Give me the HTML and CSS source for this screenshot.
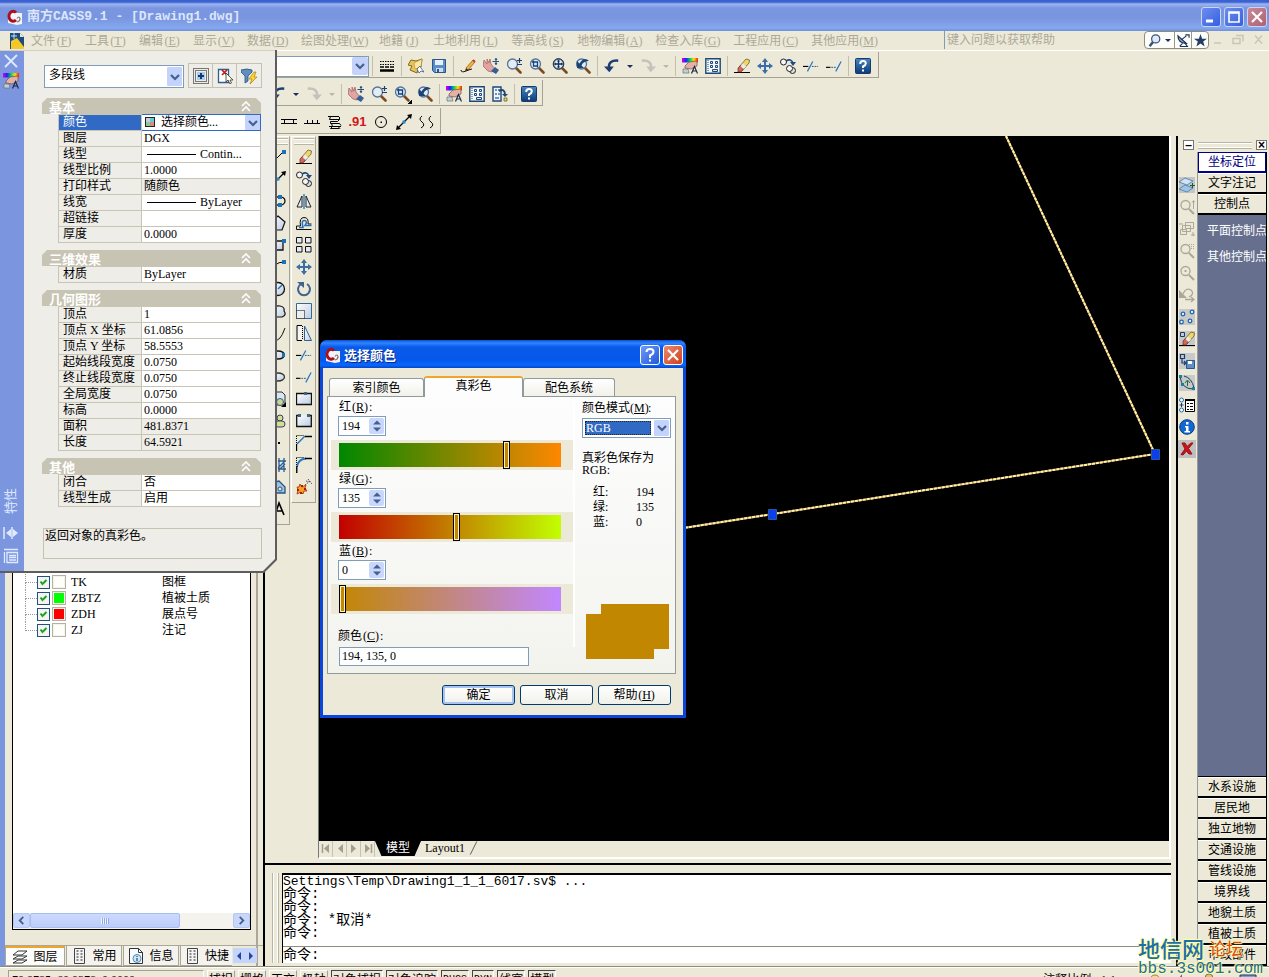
FILE: index.html
```html
<!DOCTYPE html>
<html lang="zh-CN">
<head>
<meta charset="utf-8">
<title>南方CASS9.1 - [Drawing1.dwg]</title>
<link rel="stylesheet" href="styles.css">
</head>
<body>
<svg class="sprite" aria-hidden="true">
<defs>
<linearGradient id="gl" x1="0" y1="0" x2="1" y2="1"><stop offset="0" stop-color="#fff"/><stop offset="1" stop-color="#bccbe2"/></linearGradient>
<linearGradient id="gb" x1="0" y1="0" x2="0" y2="1"><stop offset="0" stop-color="#4a86c0"/><stop offset="1" stop-color="#0c3a78"/></linearGradient>
<linearGradient id="rainbow"><stop offset="0" stop-color="#e000e0"/><stop offset=".25" stop-color="#2020ff"/><stop offset=".5" stop-color="#00d060"/><stop offset=".75" stop-color="#ffe000"/><stop offset="1" stop-color="#f02000"/></linearGradient>
</defs>
<symbol id="logo" viewBox="0 0 16 16"><path d="M1 4h14v11l-5 1-9-2z" fill="#f4f2f4"/><path d="M9 3.500A4.200 5 0 1 0 9 11" fill="none" stroke="#a5121f" stroke-width="3"/><path d="M10 9.500q2-3 3 0q0 3-3 3.500" fill="none" stroke="#777" stroke-width="1.200"/></symbol>
<symbol id="doc" viewBox="0 0 16 18"><path d="M1 1h10l4 4v12H1z" fill="#1e4a7c"/><path d="M11 1l4 4h-4z" fill="#dfe8f2"/><path d="M2 9l6-3 7 9v2H2z" fill="#f3c92a"/><path d="M5 1v6M2 4h6" stroke="#bfe3ff"/></symbol>
<symbol id="lw" viewBox="0 0 16 16"><path d="M1 3.500h14M1 6.500h14" stroke="#000" stroke-dasharray="1.500 1"/><path d="M1 9h14" stroke="#000" stroke-width="1.500" stroke-dasharray="4 1"/><path d="M1 12.500h14" stroke="#000" stroke-width="2.500"/></symbol>
<symbol id="open" viewBox="0 0 16 16"><path d="M3 2l5 1 6-2-1 8-3 1-1 5-7-3 2-4-4-1z" fill="#e8c45c" stroke="#86651c"/><path d="M6 5l8-4-1 8-6 2z" fill="#f9e9a4" stroke="#b08d34" stroke-width=".6"/><path d="M9 11l3-3 1 2 3 4-3-1-2 2z" fill="#fff" stroke="#345b8d" stroke-width=".8"/></symbol>
<symbol id="save" viewBox="0 0 16 16"><path d="M1.500 1.500h13v13h-11l-2-2z" fill="#5c8ec5" stroke="#28578e"/><path d="M4 2h8v5H4z" fill="#e6f0fa"/><path d="M5 10h7v4H5z" fill="#cddcf0"/><path d="M6 11h2v3H6z" fill="#28578e"/></symbol>
<symbol id="pencil" viewBox="0 0 16 16"><path d="M6 10L13 2l2 2-7 8z" fill="#f1b63d" stroke="#9a5a1a" stroke-width=".8"/><path d="M6 10l2 2-3 1z" fill="#3a2a1a"/><path d="M1 12q0 3 5 1q5-2 6-2" fill="none" stroke="#111"/><path d="M13 2l2 2" stroke="#c43c2c" stroke-width="2"/></symbol>
<symbol id="pan" viewBox="0 0 16 16"><path d="M1 2l3 4 0-5 2 4 1-4 1 5 4 5-3 3-4-1-5-5z" fill="#e0a5a2" stroke="#9d5a5a" stroke-width=".7"/><path d="M8 13l4-4 4 3-3 4z" fill="#355f92"/><path d="M13 0v7M9.500 3.500h7" stroke="#23507f"/><path d="M13 0l1.500 2h-3zM13 7l1.500-2h-3z" fill="#23507f"/></symbol>
<symbol id="mag" viewBox="0 0 16 16"><path d="M10 10l4.500 4.500" stroke="#7b4c22" stroke-width="2.600" stroke-linecap="round"/><circle cx="6.500" cy="6" r="5" fill="#e3ecf3" stroke="#567399" stroke-width="1.300"/></symbol>
<symbol id="zpm" viewBox="0 0 16 16"><use href="#mag"/><path d="M13.500 0v5M11 2.500h5M11 6.500h5" stroke="#1d3f6c" stroke-width="1.200"/></symbol>
<symbol id="zwin" viewBox="0 0 16 16"><use href="#mag"/><path d="M4.500 4h4v4h-4zM3 4h1.500M4.500 2.500V4M8.500 8v1.500" fill="#dbe8f6" stroke="#16427c" stroke-width="1.300"/></symbol>
<symbol id="zext" viewBox="0 0 16 16"><use href="#mag"/><path d="M6.500 2v8M2.500 6h8" stroke="#12335f" stroke-width="1.300"/><path d="M6.500 1.500L8 3.500H5zM6.500 10.500L8 8.500H5zM2 6l2-1.500v3zM11 6L9 4.500v3z" fill="#12335f"/><circle cx="6.500" cy="6" r="5.300" fill="none" stroke="#333"/></symbol>
<symbol id="zprev" viewBox="0 0 16 16"><use href="#mag"/><path d="M2 3v7h7L6.500 7.500Q8 3 14 3 9-2 4.500 5.500z" fill="#1c4375"/></symbol>
<symbol id="undo" viewBox="0 0 18 16"><path d="M16 2Q5 1 5.500 10" fill="none" stroke="#1d3e6e" stroke-width="2.800"/><path d="M0 8.500h11l-5 6.500z" fill="#1d3e6e"/></symbol>
<symbol id="redo" viewBox="0 0 18 16"><path d="M2 2Q13 1 12.500 10" fill="none" stroke="#c3c2bb" stroke-width="2.800"/><path d="M7 8.500h11l-6 6.500z" fill="#c3c2bb"/></symbol>
<symbol id="props" viewBox="0 0 16 16"><path d="M0 0h16v4.500H0z" fill="url(#rainbow)"/><path d="M3 8l4-4 8-1v5l-6 3-6-1z" fill="#e4b1a6" stroke="#7c4840" stroke-width=".7"/><path d="M1 11h5l1 4H1z" fill="#c3cfd0" stroke="#61757a" stroke-width=".7"/><path d="M9.500 15.500l3-7 3 7M10.500 13h4" fill="none" stroke="#1b2a48" stroke-width="1.200"/></symbol>
<symbol id="grid" viewBox="0 0 16 16"><path d="M.8.800h14.400v14.400H.8z" fill="#f3f7fc" stroke="#1f4775" stroke-width="1.400"/><path d="M3 2v12" stroke="#1f4775" stroke-dasharray="1 1"/><path d="M5.500 3.500h2v2h-2zM10.500 3.500h2v2h-2zM5.500 7.500h2v2h-2zM10.500 7.500h2v2h-2zM7.500 11.500h5v2h-5z" fill="#dce8f5" stroke="#1f4775"/></symbol>
<symbol id="dc" viewBox="0 0 16 16"><path d="M1 1h8v14H1z" fill="#eef4fb" stroke="#1f4775" stroke-width="1.400"/><path d="M3 3h2v2H3zM6 3h2v2H6zM3 7h2v2H3zM6 7h2v2H6zM3 11h4v2H3z" fill="#6f93bd"/><path d="M7 5q6-3 6 4" fill="none" stroke="#1f4775" stroke-width="2"/><path d="M10 8h6l-3 3z" fill="#1f4775"/><path d="M12 12h3v3h-3z" fill="#f3e33b" stroke="#333" stroke-width=".6"/></symbol>
<symbol id="eraser" viewBox="0 0 16 16"><path d="M0 14.500h16" stroke="#000"/><path d="M5 9l7-8 3.500 1-.5 3-7 8z" fill="#f0d669" stroke="#5c4a20" stroke-width=".7"/><path d="M4 10l3-3 3 3-3 4H4z" fill="#d0695a" stroke="#6b2a20" stroke-width=".7"/><path d="M6.500 8L9 5.500l3 3L9.500 11z" fill="#e8ecf2"/></symbol>
<symbol id="move" viewBox="0 0 16 16"><path d="M8 2v12M2 8h12" stroke="#3b6ea5" stroke-width="2"/><path d="M8 0l3 4H5zM8 16l3-4H5zM0 8l4-3v6zM16 8l-4-3v6z" fill="#3b6ea5"/></symbol>
<symbol id="copy" viewBox="0 0 16 16"><circle cx="3.500" cy="4" r="3" fill="#f3f6fa" stroke="#222"/><circle cx="12.500" cy="12.500" r="3" fill="#ddd" stroke="#222"/><circle cx="9.500" cy="10.500" r="3" fill="#f3f6fa" stroke="#222"/><path d="M6 3q5-3 7 2" fill="none" stroke="#1d4a80" stroke-width="1.600"/><path d="M10 4h6l-3 4z" fill="#1d4a80"/></symbol>
<symbol id="trim" viewBox="0 0 18 16"><path d="M0 8.500h6" stroke="#000" stroke-width="1.300"/><path d="M5 14l6-11" stroke="#2a77bd" stroke-width="1.400"/><path d="M10 8.500h7" stroke="#1d4a80" stroke-dasharray="2 1"/></symbol>
<symbol id="extend" viewBox="0 0 18 16"><path d="M0 9.500h5" stroke="#000" stroke-width="1.300"/><path d="M6 9.500h5" stroke="#1d4a80" stroke-dasharray="2 1"/><path d="M11 14l6-11" stroke="#2a77bd" stroke-width="1.400"/></symbol>
<symbol id="help" viewBox="0 0 16 16"><rect x=".5" y=".5" width="15" height="15" rx="1" fill="url(#gb)" stroke="#123a6b"/><path d="M5.200 6q0-3 2.800-3t2.800 2.400Q10.800 7 8 8.500V10" fill="none" stroke="#fff" stroke-width="2"/><path d="M7 11.500h2v2H7z" fill="#fff"/></symbol>
<symbol id="fence" viewBox="0 0 16 16"><path d="M0 5.500h16M0 9.500h16M3.500 5v5M12.500 5v5" stroke="#000" fill="none"/></symbol>
<symbol id="comb" viewBox="0 0 16 16"><path d="M0 9.500h16M3.500 6v4M8.500 6v4M13.500 6v4" stroke="#000"/></symbol>
<symbol id="steps" viewBox="0 0 16 16"><path d="M1 2.500h11M3.500 2.500l-1 3h10M12.500 3v2.500l-2 2H3.500v2h9l1.500 2M2 12.500h12M4.500 9.500l1 3-2 2h9M11 12.500l2 2" fill="none" stroke="#000"/></symbol>
<symbol id="cdot" viewBox="0 0 16 16"><circle cx="8" cy="8" r="5.500" fill="none" stroke="#000"/><path d="M7.500 7.500h1.500v1.500H7.500z"/></symbol>
<symbol id="larrow" viewBox="0 0 16 16"><path d="M2 14L14 2" stroke="#000" stroke-width="1.300"/><path d="M16 0l-1 5-4-4zM0 16l1-5 4 4z"/><path d="M6.500 6.500h3v3h-3z" fill="#1b8dd0"/></symbol>
<symbol id="waves" viewBox="0 0 16 16"><path d="M3 2q-4 3 0 6t-1 6M12 2q-4 3 0 6t-1 6" fill="none" stroke="#000"/></symbol>
<symbol id="mirror" viewBox="0 0 16 16"><path d="M8 1v15" stroke="#2471b4" stroke-width="1.300"/><path d="M6 3v11H1zM10 3v11h5z" fill="#e5ebf3" stroke="#222"/></symbol>
<symbol id="offset" viewBox="0 0 16 16"><path d="M.5 14.500v-3.500h4Q3 2.500 8 2.500T12 9h3.500" fill="none" stroke="#111"/><path d="M.5 14.500h15" stroke="#111"/><path d="M3 12.500h4Q5 5 8.500 5.500T9 10.500h6.500" fill="none" stroke="#2471b4" stroke-width="1.500"/></symbol>
<symbol id="array" viewBox="0 0 16 16"><path d="M.5.500h5.500v5.500H.5zM9.500.500H15v5.500H9.500zM.5 9.500h5.500V15H.5zM9.500 9.500H15V15H9.500z" fill="#e5ebf3" stroke="#111"/></symbol>
<symbol id="rotate" viewBox="0 0 16 16"><path d="M5 3A6 6 0 1 0 11 3" fill="none" stroke="#40648e" stroke-width="2"/><path d="M1 1h7v6z" fill="#40648e"/></symbol>
<symbol id="scale" viewBox="0 0 16 16"><path d="M.5.500h15v15H.5z" fill="url(#gl)" stroke="#35669a"/><path d="M.5 7.500h8v8h-8z" fill="#eee" stroke="#000" stroke-dasharray="1 1"/></symbol>
<symbol id="stretch" viewBox="0 0 16 16"><path d="M6 .5H1v15h5" fill="#f5f5f5" stroke="#000"/><path d="M6.500 1v14" stroke="#000" stroke-dasharray="1 1"/><path d="M8.500 1l7 14.500h-7z" fill="url(#gl)" stroke="#2f6190"/></symbol>
<symbol id="brkpt" viewBox="0 0 16 16"><path d="M.5 2.500h15v11H.5z" fill="url(#gl)" stroke="#111" stroke-width="1.300"/><path d="M8 1h3v3H8z" fill="#3d6588"/></symbol>
<symbol id="brk" viewBox="0 0 16 16"><path d="M1 2.500h14v11H1z" fill="url(#gl)"/><path d="M3 2.500H.700v11h14.600v-11H13" fill="none" stroke="#111" stroke-width="1.300"/><path d="M2 1h3v3H2zM11 1h3v3h-3z" fill="#3d6588"/></symbol>
<symbol id="chamfer" viewBox="0 0 16 16"><path d="M.5 1v15M.5.500h8" stroke="#000" stroke-dasharray="1 1"/><path d="M1 9L9 1" stroke="#2a77bd" stroke-width="1.500"/><path d="M9 1.500h7M.5 9v7" stroke="#000" stroke-width="1.300"/></symbol>
<symbol id="fillet" viewBox="0 0 16 16"><path d="M.5 1v15M.5.500h8" stroke="#000" stroke-dasharray="1 1"/><path d="M1 10Q2 2 10 1.500" fill="none" stroke="#2a77bd" stroke-width="1.800"/><path d="M9 1.500h7M.8 9v7" stroke="#000" stroke-width="1.300"/></symbol>
<symbol id="explode" viewBox="0 0 16 16"><path d="M1 8l2 0 1-3 2 3 4-2-1 3 2 3-3 0-1 3-2-2-4 2 1-4z" fill="#f2a322" stroke="#a52a12" stroke-width=".8"/><path d="M1 10h2v2H1zM5 6h2v2H5zM4 13h2v2H4zM8 9h2v2H8z" fill="#b3150f"/><path d="M9 6l5-4M12 0l4 5M10 2l5 1" stroke="#555" stroke-dasharray="1.500 1"/></symbol>
<symbol id="d-line" viewBox="0 0 16 16"><path d="M2 14L13 3" stroke="#000"/><path d="M12 1h4v4h-4z" fill="#1b72b8"/></symbol>
<symbol id="d-pl" viewBox="0 0 16 16"><path d="M7 4q8-1 8 4t-8 4" fill="none" stroke="#111" stroke-width="1.300"/><path d="M8 2h4v4H8zM8 10h4v4H8z" fill="#1b72b8"/></symbol>
<symbol id="d-poly" viewBox="0 0 16 16"><path d="M8 1l7 6-3 8H3L1 7z" fill="url(#gl)" stroke="#111" stroke-width="1.200"/></symbol>
<symbol id="d-rect" viewBox="0 0 16 16"><path d="M1 4h12v9H1z" fill="url(#gl)" stroke="#111" stroke-width="1.300"/><path d="M12 2h4v4h-4z" fill="#1b72b8"/></symbol>
<symbol id="d-arc" viewBox="0 0 16 16"><path d="M2 14Q3 3 14 3" fill="none" stroke="#000"/><path d="M12 1h4v4h-4z" fill="#1b72b8"/></symbol>
<symbol id="d-circ" viewBox="0 0 16 16"><circle cx="8" cy="8" r="6.500" fill="url(#gl)" stroke="#111" stroke-width="1.300"/><path d="M8 8l4-4" stroke="#1b72b8" stroke-width="1.500"/></symbol>
<symbol id="d-cloud" viewBox="0 0 16 16"><path d="M3 14q-4-5 1-6 0-6 6-5 5 1 4 5 3 4-2 6z" fill="url(#gl)" stroke="#111" stroke-width="1.200"/></symbol>
<symbol id="d-spl" viewBox="0 0 16 16"><path d="M1 4q3 16 9 9 2-2 5-10" fill="none" stroke="#111"/></symbol>
<symbol id="d-ell" viewBox="0 0 16 16"><ellipse cx="8" cy="8" rx="6.500" ry="4" fill="url(#gl)" stroke="#111" stroke-width="1.300"/><path d="M12 6h3v4h-3z" fill="#1b72b8"/></symbol>
<symbol id="d-ela" viewBox="0 0 16 16"><ellipse cx="8" cy="8" rx="6.500" ry="4" fill="url(#gl)" stroke="#333" stroke-width="1.300"/></symbol>
<symbol id="d-blk" viewBox="0 0 16 16"><path d="M6 1h6l3 3v10H6z" fill="#d6e6f5" stroke="#333"/><circle cx="10" cy="11" r="3.500" fill="#c9d49b" stroke="#345a86"/><path d="M16 11v5h-5z"/></symbol>
<symbol id="d-make" viewBox="0 0 16 16"><circle cx="10" cy="5" r="3" fill="#d4dc9c" stroke="#345"/><rect x="5" y="8" width="10" height="6" rx="3" fill="#d4dc9c" stroke="#345"/></symbol>
<symbol id="d-pt" viewBox="0 0 16 16"><path d="M8 7h2v2H8z"/></symbol>
<symbol id="d-hatch" viewBox="0 0 16 16"><path d="M8 4h8M8 12h8M9 1v14M14 1v14M8 11l7-7M9 13l6-6" stroke="#2b5d94" stroke-width="1.300"/></symbol>
<symbol id="d-reg" viewBox="0 0 16 16"><path d="M5 3l4-1 6 6v6H5z" fill="#9fc2e4" stroke="#27577f" stroke-width="1.300"/><circle cx="10" cy="10" r="2" fill="#e9e8dc" stroke="#27577f"/></symbol>
<symbol id="d-text" viewBox="0 0 16 16"><path d="M5 14L9 2l5 12M7 10h5" fill="none" stroke="#000" stroke-width="1.600"/></symbol>
<symbol id="r-lay" viewBox="0 0 16 16"><path d="M0 0h16v16H0z" fill="#c4c4c4"/><path d="M0 12l6-4 8 3-6 4z" fill="#9cc6e8" stroke="#5d8bb8"/><path d="M0 5l6-4 8 3-6 4z" fill="#cfe3f5" stroke="#5d8bb8"/><path d="M13.500 6v5M11 8.500h5" stroke="#145a35"/></symbol>
<symbol id="r-mag" viewBox="0 0 16 16"><circle cx="6.500" cy="6" r="4.500" fill="none" stroke="#aba899" stroke-width="1.300"/><path d="M10 10l5 5" stroke="#aba899" stroke-width="2"/><path d="M14.500 2v8M13 3.500l1.500-2 1.500 2" fill="none" stroke="#aba899"/></symbol>
<symbol id="r-magd" viewBox="0 0 16 16"><circle cx="6.500" cy="6" r="4.500" fill="none" stroke="#aba899" stroke-width="1.300"/><path d="M10 10l5 5" stroke="#aba899" stroke-width="2"/><path d="M10 1.500h6M10 3.500h6M12 5.500h4" stroke="#aba899" stroke-dasharray="1 1"/></symbol>
<symbol id="r-magp" viewBox="0 0 16 16"><circle cx="6.500" cy="6" r="4.500" fill="none" stroke="#aba899" stroke-width="1.300"/><path d="M10 10l5 5" stroke="#aba899" stroke-width="2"/><path d="M5.500 5h2v2h-2z" fill="#aba899"/></symbol>
<symbol id="r-cubes" viewBox="0 0 16 16"><path d="M6.500 1.500h8v6h-8zM3.500 4.500h8v6h-8zM1.500 8.500h6v5h-6z" fill="#ece9d8" stroke="#aba899"/><path d="M0 3h4M12 14h4M14 11v4" stroke="#aba899"/></symbol>
<symbol id="r-undo" viewBox="0 0 16 16"><path d="M4 7q3-7 8-4 4 4-2 7M6 12.500h8M12 10l3 2.500-3 2.500" fill="none" stroke="#aba899" stroke-width="1.300"/><path d="M0 3v8h8z" fill="#aba899"/></symbol>
<symbol id="r-pts" viewBox="0 0 16 16"><path d="M0 0h16v16H0z" fill="#c9c9c9"/><g fill="#e8f4ff" stroke="#2068ad" stroke-width="1.300"><circle cx="4" cy="5" r="1.800"/><circle cx="13" cy="3" r="1.800"/><circle cx="2.500" cy="13" r="1.800"/><circle cx="11" cy="12" r="1.800"/></g></symbol>
<symbol id="r-er" viewBox="0 0 16 16"><path d="M0 0h16v16H0z" fill="#c9c9c9"/><path d="M1.500 1.500h4v4h-4z" fill="none" stroke="#173e73"/><use href="#eraser"/></symbol>
<symbol id="r-sv" viewBox="0 0 16 16"><path d="M0 0h16v16H0z" fill="#c9c9c9"/><path d="M1.500 1.500h4v4h-4zM3 6v4h4M5 8l2 2-2 2" fill="none" stroke="#173e73" stroke-width="1.200"/><path d="M7.500 7.500h8v8h-8z" fill="#5f8dc4" stroke="#28578e"/><path d="M9 8h4v3H9z" fill="#fff"/></symbol>
<symbol id="r-arc" viewBox="0 0 16 16"><path d="M0 0h16v16H0z" fill="#c9c9c9"/><path d="M1 2q2 12 13 12M5 1q8 2 10 12" fill="none" stroke="#1b3f5b"/><path d="M0 0h3v3H0zM2 8h3v3H2zM13 12h3v3h-3z" fill="#1980a0"/><path d="M8.500 11V6M6 8l2.500-3L11 8" fill="none" stroke="#14723b"/></symbol>
<symbol id="r-list" viewBox="0 0 16 16"><path d="M6.500 2.500h9v12h-9z" fill="#fff" stroke="#000"/><path d="M6 3h10" stroke="#000" stroke-width="2"/><path d="M8 6.500h2M8 9.500h2M8 12.500h2M11 6.500h3M11 9.500h3M11 12.500h3" stroke="#000"/><circle cx="2.500" cy="3" r="2" fill="#fff" stroke="#2068ad"/><circle cx="2.500" cy="13" r="2" fill="#fff" stroke="#2068ad"/><path d="M2.500 6v4M.5 8h4" stroke="#173e73"/></symbol>
<symbol id="r-info" viewBox="0 0 16 16"><circle cx="8" cy="8" r="7.300" fill="#1268ce" stroke="#0a3b86"/><path d="M7 3h2.500v2.500H7zM6 7h3.500v5H11v1.500H5.500V12H7V8.500H6z" fill="#fff"/></symbol>
<symbol id="r-x" viewBox="0 0 18 18"><path d="M0 0h18v18H0z" fill="#bfbfbf"/><path d="M4 3h3l2 3.500L13 3l2 0-4.500 5.500L14 14l-3 0-2.500-3L5 15l-2-.5L7 9z" fill="#c4161a" stroke="#a00d12"/></symbol>
<symbol id="chev" viewBox="0 0 10 10"><path d="M1 3l4 4 4-4" fill="none" stroke="#44608f" stroke-width="2.200"/></symbol>
<symbol id="up2" viewBox="0 0 10 12"><path d="M1 5l4-4 4 4M1 10l4-4 4 4" fill="none" stroke="#fff" stroke-width="1.600"/></symbol>
<symbol id="star" viewBox="0 0 12 12"><path d="M6 0l1.500 4.300H12L8.500 7l1.300 4.500L6 8.800l-3.800 2.700L3.500 7 0 4.300h4.500z" fill="#253d63"/></symbol>
<symbol id="sat" viewBox="0 0 14 14"><path d="M1 2q0 8 9 8z" fill="#8fa5c8" stroke="#1d3257" stroke-width="1.300"/><path d="M5 6l5-4M9 1h4v3M8 9l3 4M3 13.500h9M6 10l-3 3" stroke="#1d3257" fill="none" stroke-width="1.200"/></symbol>
<symbol id="layers" viewBox="0 0 16 16"><path d="M1 14l5-3h9l-5 3zM1 10l5-3h9l-5 3zM1 6l5-4h9l-5 4z" fill="#fff" stroke="#333"/></symbol>
<symbol id="bld" viewBox="0 0 16 16"><path d="M3.500.5h10v15h-10z" fill="#f4f4f4" stroke="#444"/><path d="M6.500 2v12M10.500 2v12" stroke="#888" stroke-width="2" stroke-dasharray="2 1"/></symbol>
<symbol id="idoc" viewBox="0 0 16 16"><path d="M1.500.5h9l4 4v11h-13z" fill="#f7fbff" stroke="#333"/><path d="M10.500.5v4h4" fill="none" stroke="#333"/><circle cx="9" cy="10.500" r="4" fill="#cfe8f8" stroke="#4c8ab5"/><path d="M9 8v1M9 10v3" stroke="#124"/></symbol>
</svg>

<div class="app">
<header class="titlebar">
  <svg class="i16"><use href="#logo"/></svg>
  <h1>南方CASS9.1 - [Drawing1.dwg]</h1>
  <div class="winbtns">
    <button aria-label="最小化"><svg viewBox="0 0 18 18"><path d="M4 13h7" stroke="#fff" stroke-width="3"/></svg></button>
    <button aria-label="最大化"><svg viewBox="0 0 18 18"><path d="M4 4h10v10H4zM4 5h10" fill="none" stroke="#fff" stroke-width="1.600"/></svg></button>
    <button class="close" aria-label="关闭"><svg viewBox="0 0 18 18"><path d="M4 4l10 10M14 4L4 14" stroke="#fff" stroke-width="2.200"/></svg></button>
  </div>
</header>

<nav class="menubar">
  <svg class="docicon"><use href="#doc"/></svg>
  <a href="#">文件<span class="key">(<u>F</u>)</span></a><a href="#">工具<span class="key">(<u>T</u>)</span></a><a href="#">编辑<span class="key">(<u>E</u>)</span></a><a href="#">显示<span class="key">(<u>V</u>)</span></a><a href="#">数据<span class="key">(<u>D</u>)</span></a><a href="#">绘图处理<span class="key">(<u>W</u>)</span></a><a href="#">地籍<span class="key">(<u>J</u>)</span></a><a href="#">土地利用<span class="key">(<u>L</u>)</span></a><a href="#">等高线<span class="key">(<u>S</u>)</span></a><a href="#">地物编辑<span class="key">(<u>A</u>)</span></a><a href="#">检查入库<span class="key">(<u>G</u>)</span></a><a href="#">工程应用<span class="key">(<u>C</u>)</span></a><a href="#">其他应用<span class="key">(<u>M</u>)</span></a>
  <div class="helpbox">
    <input type="text" aria-label="帮助" placeholder="键入问题以获取帮助">
    <div class="helpbtns">
      <button class="wide" aria-label="搜索"><svg viewBox="0 0 16 16"><circle cx="9.500" cy="6" r="5" fill="#dcebfa" stroke="#3c5078" stroke-width="1.500"/><path d="M6 10l-4 5" stroke="#3c5078" stroke-width="3"/></svg><i class="caret"></i></button>
      <button aria-label="通讯中心"><svg><use href="#sat"/></svg></button>
      <button aria-label="收藏夹"><svg><use href="#star"/></svg></button>
    </div>
    <svg class="mdi" viewBox="0 0 56 16"><g fill="none" stroke="#c9c6b8" stroke-width="1.500"><path d="M5 11.500h7M27 4h7v6M24 7h7v5h-7zM46 4l7 8M53 4l-7 8"/></g></svg>
  </div>
</nav>

<div class="bars">
  <div class="bar bar1">
    <select class="combo" aria-label="图层"><option></option></select>
    <i class="sep"></i>
    <button aria-label="线宽"><svg><use href="#lw"/></svg></button>
    <i class="sep"></i>
    <button aria-label="打开"><svg><use href="#open"/></svg></button><button aria-label="保存"><svg><use href="#save"/></svg></button>
    <i class="sep"></i>
    <button aria-label="画笔"><svg><use href="#pencil"/></svg></button><button aria-label="平移"><svg><use href="#pan"/></svg></button><button aria-label="实时缩放"><svg><use href="#zpm"/></svg></button><button aria-label="窗口缩放"><svg><use href="#zwin"/></svg></button><button aria-label="全图"><svg><use href="#zext"/></svg></button><button aria-label="前图"><svg><use href="#zprev"/></svg></button>
    <i class="sep"></i>
    <button aria-label="放弃"><svg><use href="#undo"/></svg></button><button class="drop" aria-label="放弃列表"><i class="caret"></i></button><button aria-label="重做"><svg><use href="#redo"/></svg></button><button class="drop off" aria-label="重做列表"><i class="caret"></i></button>
    <i class="sep"></i>
    <button aria-label="特性"><svg><use href="#props"/></svg></button><button aria-label="设计中心"><svg><use href="#grid"/></svg></button>
    <i class="sep"></i>
    <button aria-label="删除"><svg><use href="#eraser"/></svg></button><button aria-label="移动"><svg><use href="#move"/></svg></button><button aria-label="复制"><svg><use href="#copy"/></svg></button><button aria-label="修剪"><svg><use href="#trim"/></svg></button><button aria-label="延伸"><svg><use href="#extend"/></svg></button>
    <i class="sep"></i>
    <button aria-label="帮助"><svg><use href="#help"/></svg></button>
  </div>
  <div class="bar bar2">
    <button aria-label="放弃"><svg><use href="#undo"/></svg></button><button class="drop" aria-label="放弃列表"><i class="caret"></i></button><button aria-label="重做"><svg><use href="#redo"/></svg></button><button class="drop off" aria-label="重做列表"><i class="caret"></i></button>
    <i class="sep"></i>
    <button aria-label="平移"><svg><use href="#pan"/></svg></button><button aria-label="实时缩放"><svg><use href="#zpm"/></svg></button><button class="more" aria-label="窗口缩放"><svg><use href="#zwin"/></svg></button><button aria-label="前图"><svg><use href="#zprev"/></svg></button>
    <i class="sep"></i>
    <button aria-label="特性"><svg><use href="#props"/></svg></button><button aria-label="设计中心"><svg><use href="#grid"/></svg></button><button aria-label="工具选项板"><svg><use href="#dc"/></svg></button>
    <i class="sep"></i>
    <button aria-label="帮助"><svg><use href="#help"/></svg></button>
  </div>
  <div class="bar bar3">
    <button aria-label="围墙"><svg><use href="#fence"/></svg></button><button aria-label="陡坎"><svg><use href="#comb"/></svg></button><button aria-label="台阶"><svg><use href="#steps"/></svg></button><button class="num">.91</button><button aria-label="圆"><svg><use href="#cdot"/></svg></button><button aria-label="直线"><svg><use href="#larrow"/></svg></button><button aria-label="曲线"><svg><use href="#waves"/></svg></button>
  </div>
</div>

<main class="work">
  <aside class="layerpane">
    <div class="layerbox">
      <ul class="layers">
        <li><label><input type="checkbox" checked><i class="sw"></i><span>TK</span></label><span>图框</span></li>
        <li><label><input type="checkbox" checked><i class="sw green"></i><span>ZBTZ</span></label><span>植被土质</span></li>
        <li><label><input type="checkbox" checked><i class="sw red"></i><span>ZDH</span></label><span>展点号</span></li>
        <li><label><input type="checkbox" checked><i class="sw"></i><span>ZJ</span></label><span>注记</span></li>
      </ul>
      <div class="hscroll">
        <button aria-label="向左"><svg viewBox="0 0 10 10"><path d="M7 1L3 5l4 4" fill="none" stroke="#44608f" stroke-width="2"/></svg></button>
        <div class="track"><div class="thumb"></div></div>
        <button aria-label="向右"><svg viewBox="0 0 10 10"><path d="M3 1l4 4-4 4" fill="none" stroke="#44608f" stroke-width="2"/></svg></button>
      </div>
    </div>
    <div class="panetabs">
      <button class="on"><svg class="i16"><use href="#layers"/></svg>图层</button>
      <button><svg class="i16"><use href="#bld"/></svg>常用</button>
      <button><svg class="i16"><use href="#idoc"/></svg>信息</button>
      <button class="cut"><svg class="i16"><use href="#bld"/></svg>快捷</button>
      <span class="nudge"><button aria-label="上一个"><svg viewBox="0 0 8 8"><path d="M6 0v8L2 4z" fill="#26439b"/></svg></button><button aria-label="下一个"><svg viewBox="0 0 8 8"><path d="M2 0v8l4-4z" fill="#26439b"/></svg></button></span>
    </div>
  </aside>

  <section class="center">
    <div class="drawing">
      <div class="vbar">
        <i class="vgrip"></i>
        <button aria-label="直线"><svg><use href="#d-line"/></svg></button><button aria-label="构造线"><svg><use href="#larrow"/></svg></button><button aria-label="多段线"><svg><use href="#d-pl"/></svg></button><button aria-label="正多边形"><svg><use href="#d-poly"/></svg></button><button aria-label="矩形"><svg><use href="#d-rect"/></svg></button><button aria-label="圆弧"><svg><use href="#d-arc"/></svg></button><button aria-label="圆"><svg><use href="#d-circ"/></svg></button><button aria-label="云线"><svg><use href="#d-cloud"/></svg></button><button aria-label="样条曲线"><svg><use href="#d-spl"/></svg></button><button aria-label="椭圆"><svg><use href="#d-ell"/></svg></button><button aria-label="椭圆弧"><svg><use href="#d-ela"/></svg></button><button aria-label="插入块"><svg><use href="#d-blk"/></svg></button><button aria-label="创建块"><svg><use href="#d-make"/></svg></button><button aria-label="点"><svg><use href="#d-pt"/></svg></button><button aria-label="填充"><svg><use href="#d-hatch"/></svg></button><button aria-label="面域"><svg><use href="#d-reg"/></svg></button><button aria-label="文字"><svg><use href="#d-text"/></svg></button>
      </div>
      <div class="vbar">
        <i class="vgrip"></i>
        <button aria-label="删除"><svg><use href="#eraser"/></svg></button><button aria-label="复制"><svg><use href="#copy"/></svg></button><button aria-label="镜像"><svg><use href="#mirror"/></svg></button><button aria-label="偏移"><svg><use href="#offset"/></svg></button><button aria-label="阵列"><svg><use href="#array"/></svg></button><button aria-label="移动"><svg><use href="#move"/></svg></button><button aria-label="旋转"><svg><use href="#rotate"/></svg></button><button aria-label="缩放"><svg><use href="#scale"/></svg></button><button aria-label="拉伸"><svg><use href="#stretch"/></svg></button><button aria-label="修剪"><svg><use href="#trim"/></svg></button><button aria-label="延伸"><svg><use href="#extend"/></svg></button><button aria-label="打断于点"><svg><use href="#brkpt"/></svg></button><button aria-label="打断"><svg><use href="#brk"/></svg></button><button aria-label="倒角"><svg><use href="#chamfer"/></svg></button><button aria-label="圆角"><svg><use href="#fillet"/></svg></button><button aria-label="分解"><svg><use href="#explode"/></svg></button>
      </div>
      <div class="viewport">
        <svg class="canvas">
          <g fill="none" stroke="#b78b33" stroke-width="2"><path d="M687 0L836 318L250 410"/><path d="M687 0L836 318L250 410" stroke="#fff0b8" stroke-dasharray="3 1"/></g>
          <g fill="#0a3ff0" stroke="#2a5a9c"><path d="M832.500 313.500h8v10h-8zM449.500 373.500h8v10h-8z"/></g>
        </svg>
        <div class="viewtabs">
          <svg class="vnav" viewBox="0 0 56 16"><path d="M13.500 0v16M27.500 0v16M41.500 0v16M55.500 0v16" stroke="#c5c2b2"/><path d="M3.500 3v9M52.500 3v9" stroke="#a19e8e" stroke-width="1.500"/><path d="M10 3v9L5 7.500zM24 3v9l-5-4.500zM32 3v9l5-4.500zM46 3v9l5-4.500z" fill="#a19e8e"/></svg>
          <button class="model">模型</button><button class="layout">Layout1</button><svg class="slant" viewBox="0 0 10 16"><path d="M1 14.500L8 .5" stroke="#555"/></svg>
        </div>
      </div>
    </div>
    <div class="command">
      <i class="cgrip"></i>
      <div class="cmdbox">
        <pre class="log"><span>Settings\Temp\Drawing1_1_1_6017.sv$ ...</span>
命令:
命令:
命令: *取消*
命令:</pre>
        <label class="prompt">命令:<input type="text" aria-label="命令"></label>
      </div>
    </div>
  </section>

  <aside class="right">
    <div class="rtop"><button aria-label="折叠">–</button><i></i><button aria-label="关闭">×</button></div>
    <div class="rbody">
      <div class="rtools">
        <button aria-label="图层"><svg><use href="#r-lay"/></svg></button><button aria-label="缩放"><svg><use href="#r-mag"/></svg></button><button aria-label="实体"><svg><use href="#r-cubes"/></svg></button><button aria-label="窗口"><svg><use href="#r-magd"/></svg></button><button aria-label="中心"><svg><use href="#r-magp"/></svg></button><button aria-label="返回"><svg><use href="#r-undo"/></svg></button><button aria-label="点"><svg><use href="#r-pts"/></svg></button><button aria-label="删除"><svg><use href="#r-er"/></svg></button><button aria-label="保存"><svg><use href="#r-sv"/></svg></button><button aria-label="弧"><svg><use href="#r-arc"/></svg></button><button aria-label="列表"><svg><use href="#r-list"/></svg></button><button aria-label="信息"><svg><use href="#r-info"/></svg></button><button aria-label="取消"><svg class="big"><use href="#r-x"/></svg></button>
      </div>
      <div class="rmenu">
        <button class="sel">坐标定位</button><button>文字注记</button><button>控制点</button>
        <div class="rlist"><a href="#">平面控制点</a><a href="#">其他控制点</a></div>
        <button>水系设施</button><button>居民地</button><button>独立地物</button><button>交通设施</button><button>管线设施</button><button>境界线</button><button>地貌土质</button><button>植被土质</button><button>市政部件</button>
      </div>
    </div>
  </aside>
</main>

<footer class="status">
  <output>70.8785, 60.9378, 0.0000</output>
  <button>捕捉</button><button>栅格</button><button>正交</button><button>极轴</button><button class="in">对象捕捉</button><button class="in">对象追踪</button><button class="in en">DUCS</button><button class="in en">DYN</button><button class="in">线宽</button><button class="in">模型</button>
  <span class="scale">注释比例: &nbsp;1:1</span>
  <svg class="tray" viewBox="0 0 120 16"><circle cx="10" cy="8" r="5" fill="#f4e36a" stroke="#998a2a"/><path d="M30 12l7-10v10z" fill="#667"/><circle cx="64" cy="6" r="4" fill="#eac84a" stroke="#775"/><path d="M95 3h16v12H95z" fill="#6aa7dd" stroke="#235"/></svg>
</footer>
</div>

<section class="palette" aria-label="特性">
 <div class="pinner">
  <div class="pstrip">
    <svg class="px" viewBox="0 0 14 14"><path d="M1 1l12 12M13 1L1 13" stroke="#dfe9ff" stroke-width="1.800"/></svg>
    <svg class="i16"><use href="#props"/></svg>
    <span class="vtitle">特性</span>
    <svg class="i16" viewBox="0 0 16 16"><path d="M1 2v12M9 2v12" stroke="#dfe9ff" stroke-width="1.500"/><path d="M3 8l5-4v8zM15 8l-5-4v8z" fill="#dfe9ff"/></svg>
    <svg class="i16" viewBox="0 0 16 16"><path d="M1 1.500h14M1.500 4v11M4 4.500h10.500v10H4zM6 7.500h7M6 9.500h7M6 12h7" fill="none" stroke="#dfe9ff" stroke-width="1.300"/></svg>
  </div>
  <div class="pbody">
    <div class="ptop">
      <div class="combo pcombo"><select aria-label="对象"><option>多段线</option></select><i class="arr"><svg><use href="#chev"/></svg></i></div>
      <div class="pbtns">
        <button aria-label="切换"><svg viewBox="0 0 16 16"><path d="M.5.500h15v15H.5zM2.500 2.500h11v11h-11z" fill="none" stroke="#000" stroke-dasharray="1 1"/><path d="M4 4h8v8H4z" fill="#a9cdee"/><path d="M8 5v6M5 8h6" stroke="#123a6b" stroke-width="2"/></svg></button>
        <button aria-label="选择对象"><svg viewBox="0 0 16 16"><path d="M1.500 1.500h10v13h-10z" fill="#fff" stroke="#345b8d" stroke-width="1.300"/><path d="M5 2l5 5M10 2L5 7" stroke="#c31414" stroke-width="1.600"/><path d="M9 5v9l2-2 2 4 1.500-1-1.500-3h3z" fill="#ffe" stroke="#333" stroke-width=".8"/></svg></button>
        <button aria-label="快速选择"><svg viewBox="0 0 16 16"><path d="M0 2q6-2 11 0v2L7 8v5l-3 2V8L0 4z" fill="#5f8fbd" stroke="#24517c" stroke-width=".8"/><path d="M13 4l-5 7h3l-2 5 7-7h-3l2-5z" fill="#ffd92b" stroke="#a97b12" stroke-width=".7"/></svg></button>
      </div>
    </div>

    <h2>基本<svg><use href="#up2"/></svg></h2>
    <table>
      <tr class="cur"><th>颜色</th><td><span class="chip"></span>选择颜色...<i class="arr"><svg><use href="#chev"/></svg></i></td></tr>
      <tr><th>图层</th><td>DGX</td></tr>
      <tr><th>线型</th><td><i class="ln"></i>Contin...</td></tr>
      <tr><th>线型比例</th><td>1.0000</td></tr>
      <tr class="ro"><th>打印样式</th><td>随颜色</td></tr>
      <tr><th>线宽</th><td><i class="ln"></i>ByLayer</td></tr>
      <tr><th>超链接</th><td></td></tr>
      <tr><th>厚度</th><td>0.0000</td></tr>
    </table>
    <h2>三维效果<svg><use href="#up2"/></svg></h2>
    <table>
      <tr><th>材质</th><td>ByLayer</td></tr>
    </table>
    <h2>几何图形<svg><use href="#up2"/></svg></h2>
    <table>
      <tr><th>顶点</th><td>1</td></tr>
      <tr><th>顶点 X 坐标</th><td>61.0856</td></tr>
      <tr><th>顶点 Y 坐标</th><td>58.5553</td></tr>
      <tr><th>起始线段宽度</th><td>0.0750</td></tr>
      <tr><th>终止线段宽度</th><td>0.0750</td></tr>
      <tr><th>全局宽度</th><td>0.0750</td></tr>
      <tr><th>标高</th><td>0.0000</td></tr>
      <tr class="ro"><th>面积</th><td>481.8371</td></tr>
      <tr class="ro"><th>长度</th><td>64.5921</td></tr>
    </table>
    <h2>其他<svg><use href="#up2"/></svg></h2>
    <table>
      <tr><th>闭合</th><td>否</td></tr>
      <tr><th>线型生成</th><td>启用</td></tr>
    </table>
    <p class="desc">返回对象的真彩色。</p>
  </div>
 </div>
</section>

<section class="dialog" role="dialog" aria-label="选择颜色">
  <header>
    <svg class="i16"><use href="#logo"/></svg>
    <h2>选择颜色</h2>
    <button class="q" aria-label="帮助"><svg viewBox="0 0 18 18"><path d="M5.500 6q0-3 3.500-3t3.500 2.700Q12.500 8 9 9.500V12M9 13.500v2" fill="none" stroke="#fff" stroke-width="2"/></svg></button><button class="close" aria-label="关闭"><svg viewBox="0 0 18 18"><path d="M4 4l10 10M14 4L4 14" stroke="#fff" stroke-width="2.200"/></svg></button>
  </header>
  <div class="dbody">
    <div class="dtabs"><button class="t1">索引颜色</button><button class="t2">真彩色</button><button class="t3">配色系统</button></div>
    <div class="dpanel">
      <div class="dleft">
        <label for="r">红<span class="key">(<u>R</u>)</span>:</label>
        <div class="spin"><input id="r" type="text" value="194"><span><svg viewBox="0 0 14 14"><path d="M3 5.500L7 1.500l4 4zM3 8.500l4 4 4-4z" fill="#44608f"/></svg></span></div>
        <input class="range rr" type="range" min="0" max="255" value="194" aria-label="红">
        <label for="g">绿<span class="key">(<u>G</u>)</span>:</label>
        <div class="spin"><input id="g" type="text" value="135"><span><svg viewBox="0 0 14 14"><path d="M3 5.500L7 1.500l4 4zM3 8.500l4 4 4-4z" fill="#44608f"/></svg></span></div>
        <input class="range rg" type="range" min="0" max="255" value="135" aria-label="绿">
        <label for="b">蓝<span class="key">(<u>B</u>)</span>:</label>
        <div class="spin"><input id="b" type="text" value="0"><span><svg viewBox="0 0 14 14"><path d="M3 5.500L7 1.500l4 4zM3 8.500l4 4 4-4z" fill="#44608f"/></svg></span></div>
        <input class="range rb" type="range" min="0" max="255" value="0" aria-label="蓝">
        <label class="lc" for="c">颜色<span class="key">(<u>C</u>)</span>:</label>
        <input id="c" class="ctext" type="text" value="194, 135, 0">
      </div>
      <div class="dright">
        <label for="m">颜色模式<span class="key">(<u>M</u>)</span>:</label>
        <div class="combo mode"><select id="m"><option>RGB</option></select><i class="arr"><svg><use href="#chev"/></svg></i></div>
        <p>真彩色保存为<br>RGB:</p>
        <dl><dt>红:</dt><dd>194</dd><dt>绿:</dt><dd>135</dd><dt>蓝:</dt><dd>0</dd></dl>
        <svg class="swatch" viewBox="0 0 83 55"><path d="M15 0h68v45H68v10H0V10h15z" fill="#c28700"/></svg>
      </div>
    </div>
    <div class="dbtns"><button class="ok">确定</button><button>取消</button><button>帮助<span class="key">(<u>H</u>)</span></button></div>
  </div>
</section>

<div class="mark"><div><b>地信网</b><em>论坛</em></div><span>bbs.3s001.com</span></div>
</body>
</html>
```
FILE: styles.css
```css
* { box-sizing: border-box; }
body {
  margin: 0;
  height: 100vh;
  overflow: hidden;
  position: relative;
  background: #ece9d8;
  color: #000;
  font: 12px/16px "Liberation Serif", "Noto Sans CJK SC", serif;
}
button, input, select { font: inherit; color: inherit; margin: 0; padding: 0; border: 0; background: none; border-radius: 0; outline: 0; }
select { appearance: none; }
button { display: inline-flex; align-items: center; justify-content: center; flex: none; white-space: nowrap; }
h1, h2, p, ul, dl, dd, pre { margin: 0; padding: 0; }
a { color: inherit; text-decoration: none; }
i, em { font-style: normal; }
.sprite { position: absolute; width: 0; height: 0; }
.i16 { width: 16px; height: 16px; flex: none; display: block; }
.key { display: inline-block; width: 18px; text-align: center; }
.caret { width: 0; height: 0; border: 3px solid transparent; border-top-color: #1c2c60; border-bottom: 0; }

.app { display: flex; flex-direction: column; height: calc(100vh + 12px); }

/* title bar */
.titlebar {
  flex: none; height: 31px; padding: 3px 2px 0 7px;
  display: flex; align-items: center; gap: 4px;
  background: linear-gradient(#3a62d0 0, #3a62d0 2px, #9db5f0 4px, #7b96e1 8px, #7a95e0 18px, #84a8ee 28px, #6f8fdc 31px);
}
.titlebar h1 { flex: 1; font: bold 13px/20px "Liberation Mono", "Noto Sans CJK SC", monospace; color: #dce6fb; }
.winbtns { display: flex; gap: 3px; }
.winbtns button { width: 20px; height: 20px; border: 1px solid #c8d5f8; border-radius: 3px; background: linear-gradient(135deg, #6d8df0, #3460e0); }
.winbtns button.close { background: linear-gradient(135deg, #c98a98, #b06070); }
.winbtns svg { width: 18px; height: 18px; }

/* menu bar */
.menubar { flex: none; height: 20px; display: flex; align-items: center; padding-left: 9px; border-bottom: 1px solid #fff; color: #aca899; }
.menubar a { margin-right: 12px; white-space: nowrap; }
.docicon { width: 16px; height: 18px; margin-right: 6px; flex: none; }
.helpbox { margin-left: auto; display: flex; height: 19px; width: 325px; }
.helpbox input { width: 200px; border-left: 1px solid #7f9db9; padding-left: 2px; height: 18px; }
.helpbox input::placeholder { color: #aca899; opacity: 1; }
.helpbtns { display: flex; border: 1px solid #8f8c7c; border-radius: 4px; height: 18px; width: 65px; background: #fdfdfa; }
.helpbtns button { width: 17px; border-left: 1px solid #9a9888; }
.helpbtns button.wide { width: 29px; border: 0; gap: 4px; }
.helpbtns svg { width: 13px; height: 13px; }
.mdi { width: 56px; height: 17px; }

/* toolbars */
.bars { flex: none; padding-bottom: 1px; }
.bar { height: 28px; padding: 4px 0 2px; display: flex; align-items: center; position: relative; width: max-content; }
.bar::after { content: ""; position: absolute; inset: 1px 0 1px 0; border-right: 1px solid #a5a294; border-bottom: 1px solid #a5a294; pointer-events: none; }
.bar1 { padding-left: 250px; padding-right: 5px; }
.bar2 { padding-left: 266px; padding-right: 3px; }
.bar3 { padding-left: 277px; padding-right: 3px; }
.bar button { width: 23px; height: 22px; }
.bar button svg { width: 16px; height: 16px; }
.bar button.drop { width: 13px; }
.bar button.off .caret { border-top-color: #bab7a8; }
.bar button.num { font: bold 13px/16px "Liberation Sans", "Noto Sans CJK SC", sans-serif; color: #d3151c; }
.bar button.more { background: linear-gradient(135deg, transparent 50%, #000 50%) 18px 17px / 4px 4px no-repeat; }
.sep { width: 1px; height: 20px; margin: 0 2px 0 3px; background: #c2bfae; flex: none; }
.bar .combo { width: 119px; height: 21px; border: 1px solid #7f9db9; background: #fff url("data:image/svg+xml,%3Csvg xmlns='http://www.w3.org/2000/svg' width='16' height='18'%3E%3Crect width='16' height='18' rx='2' fill='%23c5d3fb'/%3E%3Cpath d='M4 7l4 4 4-4' fill='none' stroke='%2344608f' stroke-width='2.2'/%3E%3C/svg%3E") right center no-repeat; }

/* workspace */
.work { flex: 1; min-height: 0; display: flex; border-bottom: 1px solid #8f8c7c; }
.layerpane { width: 265px; flex: none; display: flex; flex-direction: column; border-left: 5px solid #7a96df; border-right: 2px solid #000; box-shadow: inset -5px 0 0 #ece9d8, inset -7px 0 0 #aaa798; }
.layerbox { flex: 1; min-height: 0; display: flex; flex-direction: column; margin: 3px 12px 15px 7px; border: 1px solid #000; background: #fff; }
.layers { flex: 1; list-style: none; padding: 434px 0 0 12px; }
.layers li { display: flex; height: 16px; align-items: center; position: relative; padding-left: 12px; }
.layers li::before { content: ""; position: absolute; left: 0; top: 0; width: 11px; height: 8px; border-left: 1px dotted #999; border-bottom: 1px dotted #999; }
.layers li:not(:last-child)::after { content: ""; position: absolute; left: 0; top: 8px; height: 8px; border-left: 1px dotted #999; }
.layers label { width: 125px; display: flex; align-items: center; }
.layers input { appearance: none; width: 13px; height: 13px; border: 1px solid #1d5281; background: #f4f4f0 url("data:image/svg+xml,%3Csvg xmlns='http://www.w3.org/2000/svg' viewBox='0 0 11 11'%3E%3Cpath d='M2.500 4.500l2 2.500 4-4' fill='none' stroke='%2321a121' stroke-width='2'/%3E%3C/svg%3E") center no-repeat; margin-right: 2px; }
.sw { width: 14px; height: 14px; border: 1px solid #b5b2a4; background: #fffffa; margin-right: 5px; box-shadow: inset 0 0 0 1px #f5f3ea; }
.sw.green { background: #0f0; }
.sw.red { background: #f00; }
.hscroll { display: flex; height: 16px; background: #f4f3ee; }
.hscroll button { width: 17px; height: 15px; background: #c8d6fb; border: 1px solid #b5c6f2; border-radius: 2px; }
.hscroll svg { width: 9px; height: 9px; }
.track { flex: 1; }
.thumb { width: 74%; height: 15px; border: 1px solid #a9bdf0; border-radius: 2px; background: repeating-linear-gradient(90deg, #eef3ff 0 1px, #8faae8 1px 2px) center / 8px 6px no-repeat, linear-gradient(#cbdafe, #bccdf9); }
.panetabs { flex: none; display: flex; height: 21px; gap: 1px; border-top: 1px solid #aca899; padding-right: 6px; }
.panetabs button { width: 56px; gap: 5px; border: 1px solid #aca899; border-top: 0; background: #f4f3ee; height: 20px; }
.panetabs .on { width: 60px; background: #fdfdfb; border-top: 2px solid #efa52d; }
.panetabs .cut { border-right: 0; width: 52px; }
.panetabs .nudge { display: flex; }
.panetabs .nudge button { width: 12px; height: 15px; margin-top: 2px; border: 0; background: #c5d4fb; }
.nudge svg { width: 8px; height: 8px; }

.center { flex: 1; min-width: 0; display: flex; flex-direction: column; }
.drawing { flex: 1; min-height: 0; display: flex; border-bottom: 2px solid #000; padding-bottom: 4px; }
.vbar { width: 25px; flex: none; align-self: flex-start; display: flex; flex-direction: column; align-items: center; border: 1px solid #a5a294; border-left-color: #fff; border-top-color: #fff; padding-bottom: 4px; margin-right: 1px; }
.vbar button { width: 22px; height: 22px; }
.vbar svg { width: 16px; height: 16px; }
.vgrip { width: 20px; height: 7px; margin: 1px 0; border: solid #b8b5a5; border-width: 1px 0; background: linear-gradient(#fff 0 1px, transparent 1px 4px, #fff 4px); }
.viewport { flex: 1; min-width: 0; display: flex; flex-direction: column; margin-left: 1px; margin-right: 2px; border-left: 1px solid #777; box-shadow: 2px 0 0 #fff; border-bottom: 2px solid #fff; }
.canvas { flex: 1; min-height: 0; width: 100%; display: block; background: #000; }
.viewtabs { flex: none; height: 16px; display: flex; line-height: 15px; }
.vnav { width: 56px; height: 16px; }
.viewtabs button { height: 15px; }
.model { width: 46px; background: #000; color: #fff; clip-path: polygon(0 0, 100% 0, 86% 100%, 14% 100%); }
.layout { padding: 0 4px; }
.slant { width: 10px; height: 15px; }

.command { flex: none; height: 101px; display: flex; padding: 8px 0 3px 7px; }
.cgrip { width: 7px; border: solid #b8b5a5; border-width: 0 1px; background: linear-gradient(90deg, #fff 0 1px, transparent 1px 4px, #fff 4px); margin-right: 3px; }
.cmdbox { flex: 1; display: flex; flex-direction: column; border: 1px solid #000; border-width: 2px 0 0 1px; background: #fff; font: 14px/13px "Liberation Mono", "Noto Sans CJK SC", monospace; }
.log { flex: 1; font: inherit; overflow: hidden; }
.log span { font-size: 13px; }
.prompt { display: flex; align-items: center; height: 17px; border-top: 1px solid #8f8c7c; }
.prompt input { flex: 1; }

/* right screen menu */
.right { width: 93px; flex: none; border-left: 2px solid #000; margin-left: 5px; padding: 2px 2px 0 0; display: flex; flex-direction: column; }
.rtop { height: 14px; flex: none; display: flex; align-items: center; justify-content: space-between; padding-left: 5px; gap: 4px; }
.rtop button { width: 11px; height: 10px; border: 1px solid #777; background: #fff; font: bold 12px/8px "Liberation Sans", sans-serif; }
.rtop i { flex: 1; height: 7px; border: solid #b8b5a5; border-width: 1px 0; background: linear-gradient(#fff 0 1px, transparent 1px 4px, #fff 4px); }
.rbody { flex: 1; min-height: 0; display: flex; }
.rtools { width: 19px; padding-top: 22px; flex: none; }
.rtools button { width: 18px; height: 22px; display: flex; }
.rtools svg { width: 16px; height: 16px; }
.rtools svg.big { width: 18px; height: 18px; }
.rmenu { flex: 1; min-width: 0; display: flex; flex-direction: column; border-left: 1px solid #999; border-right: 1px solid #000; }
.rmenu button { height: 21px; border-bottom: 2px solid #000; border-top: 1px solid #fff; }
.rmenu button.sel { background: #fff; color: #000080; border: 1px solid #00008b; border-bottom-width: 2px; }
.rlist { flex: 1; background: #666f8e; color: #fff; padding: 7px 0 0 9px; overflow: hidden; border-bottom: 1px solid #000; }
.rlist a { display: block; line-height: 18px; margin-bottom: 8px; white-space: nowrap; }

/* status bar */
.status { flex: none; height: 22px; display: flex; align-items: center; padding: 2px 4px 0 8px; gap: 3px; line-height: 18px; border-top: 1px solid #fff; }
.status output { width: 196px; border: 1px solid #a5a294; border-right-color: #fff; padding-left: 3px; height: 19px; white-space: nowrap; overflow: hidden; }
.status button { height: 19px; padding: 0 1px; border: 1px solid #a5a294; border-top-color: #fff; border-left-color: #fff; }
.status button.in { border-color: #444 #fff #fff #444; }
.status button.en { font: 10px/18px "Liberation Mono", monospace; }
.status .scale { margin-left: auto; }
.tray { width: 120px; height: 16px; margin-left: 26px; }

/* property palette */
.arr { display: flex; align-items: center; justify-content: center; width: 15px; background: #c3d3fb; border-radius: 1px; pointer-events: none; }
.arr svg { width: 10px; height: 10px; }
div.combo { display: flex; border: 1px solid #7f9db9; background: #fff; padding: 1px; }
div.combo select { flex: 1; min-width: 0; }
.palette { position: absolute; left: 0; top: 50px; width: 277px; background: #5d5d5d; clip-path: polygon(0 0, 100% 0, 100% calc(100% - 13px), calc(100% - 13px) 100%, 0 100%); padding: 0 2px 2px 0; }
.pinner { display: flex; background: #eeede8; border-top: 1px solid #d4d0bd; clip-path: polygon(0 0, 100% 0, 100% calc(100% - 12px), calc(100% - 12px) 100%, 0 100%); }
.pstrip { width: 24px; flex: none; background: #7b96df; display: flex; flex-direction: column; align-items: flex-start; padding: 3px 0 7px 3px; gap: 7px; }
.px { width: 14px; height: 14px; margin-left: 1px; margin-bottom: -2px; }
.vtitle { margin-top: auto; writing-mode: vertical-rl; text-orientation: sideways; transform: rotate(180deg); color: #dfe9ff; font-size: 13px; margin-bottom: 4px; }
.pbody { flex: 1; padding: 12px 14px 12px 18px; }
.ptop { display: flex; align-items: flex-end; justify-content: space-between; padding-left: 2px; height: 25px; margin-bottom: 10px; margin-right: -1px; }
.pcombo { width: 140px; height: 23px; }
.pcombo select { padding: 0 0 3px 3px; }
.pbtns { display: flex; border: 1px solid #c5c2b2; height: 25px; }
.pbtns button { width: 24px; border-right: 1px solid #c5c2b2; }
.pbtns button:last-child { border-right: 0; }
.pbtns svg { width: 16px; height: 16px; }
.pbody h2 { display: flex; justify-content: space-between; align-items: center; height: 16px; padding: 2px 10px 0 7px; background: #c8c4b4; color: #fff; font: bold 13px/14px "Noto Sans CJK SC", sans-serif; clip-path: polygon(5px 0, calc(100% - 5px) 0, 100% 5px, 100% 100%, 0 100%, 0 5px); }
.pbody h2 svg { width: 10px; height: 12px; }
.pbody table { border-collapse: collapse; table-layout: fixed; width: 203px; margin: 0 0 7px 16px; }
.pbody tr { height: 16px; }
.pbody th, .pbody td { border: 1px solid #c8c5b5; padding: 0; line-height: 15px; height: 15px; font-weight: normal; text-align: left; white-space: nowrap; }
.pbody th { width: 83px; padding-left: 4px; }
.pbody td { background: #fff; padding-left: 2px; }
.pbody .ro td { background: #eeede8; }
.pbody .cur th { background: #316ac5; color: #fff; }
.pbody .cur td { position: relative; border-color: #316ac5; }
.cur .arr { position: absolute; right: 0; top: 0; bottom: 0; }
.chip { display: inline-block; width: 10px; height: 10px; border: 1px solid #222; background: conic-gradient(#6cc 25%, #d88 0 50%, #8c8 0 75%, #ccd 0); margin: 0 6px 0 1px; vertical-align: -1px; }
.ln { display: inline-block; width: 49px; height: 1px; background: #000; margin: 0 4px 0 3px; vertical-align: 3px; }
.desc { margin: 21px -1px 0 1px; height: 31px; border: 1px solid #c5c2b2; padding-left: 1px; line-height: 15px; }

/* colour dialog */
.dialog { position: absolute; left: 320px; top: 340px; width: 366px; background: #0a46dc; border-radius: 7px 7px 0 0; padding: 0 3px 3px; }
.dialog header { height: 28px; margin: 0 -3px; padding: 2px 3px 0 5px; display: flex; align-items: center; gap: 3px; border-radius: 7px 7px 0 0; background: linear-gradient(#0a4fd8 0, #2f86ff 3px, #0a5ae8 7px, #0558ea 20px, #0a66ff 25px, #0348c8); }
.dialog header h2 { flex: 1; font: bold 13px/20px "Noto Sans CJK SC", sans-serif; color: #fff; text-shadow: 1px 1px 0 #0a2a80; }
.dialog header button { width: 20px; height: 20px; border: 1px solid #fff; border-radius: 3px; background: linear-gradient(135deg, #6f9af8, #2259da); }
.dialog header button.close { background: linear-gradient(135deg, #ee8a6c, #cf3f1c); }
.dialog header svg { width: 18px; height: 18px; }
.dialog header svg.i16 { width: 16px; height: 16px; }
.dbody { background: #ece9d8; padding: 8px 7px 10px 4px; }
.dtabs { display: flex; align-items: flex-end; padding-left: 2px; height: 20px; }
.dtabs button { height: 18px; border: 1px solid #919b9c; border-bottom: 0; border-radius: 3px 3px 0 0; background: linear-gradient(#fff, #f2f1ea); }
.dtabs .t1 { width: 95px; }
.dtabs .t2 { width: 99px; height: 21px; margin-bottom: -1px; border-top: 2px solid #f0a62c; background: #fdfdfe; position: relative; padding-bottom: 4px; }
.dtabs .t3 { width: 92px; }
.dpanel { display: flex; border: 1px solid #919b9c; background: linear-gradient(#fdfdfe, #f3f3ee); height: 278px; }
.dleft { width: 247px; padding: 2px 0 0 3px; position: relative; }
.dleft::after { content: ""; position: absolute; right: 0; top: 4px; bottom: 26px; width: 2px; background: #fff; }
.dleft label { display: block; margin-left: 8px; line-height: 16px; }
.spin { display: flex; width: 48px; height: 20px; margin: 1px 0 4px 7px; border: 1px solid #7f9db9; background: #fff; padding: 1px; }
.spin input { width: 29px; padding-left: 2px; flex: none; }
.spin span { flex: 1; background: #c8d7fb; border-radius: 2px; display: flex; align-items: center; justify-content: center; }
.spin svg { width: 14px; height: 14px; }
.range { appearance: none; display: block; width: 243px; height: 30px; padding: 0 13px 0 8px; margin: 0 0 1px; background: #ece9d8; }
.range::-webkit-slider-runnable-track { height: 24px; }
.range::-webkit-slider-thumb { appearance: none; width: 7px; height: 28px; margin-top: -2px; border: 1px solid #000; background: #c28700; box-shadow: inset 0 0 0 1px #fff3c0; }
.rr::-webkit-slider-runnable-track { background: linear-gradient(90deg, #008700, #ff8700); }
.rg::-webkit-slider-runnable-track { background: linear-gradient(90deg, #c20000, #c2ff00); }
.rb::-webkit-slider-runnable-track { background: linear-gradient(90deg, #c28700, #c287ff); }
.dleft .lc { margin: 14px 0 3px 7px; }
.ctext { display: block; width: 190px; height: 19px; margin-left: 8px; border: 1px solid #7f9db9; background: #fff; padding-left: 2px; }
.dright { flex: 1; padding: 3px 4px 0 7px; }
.dright label { display: block; margin-bottom: 2px; white-space: nowrap; }
.mode { height: 20px; margin-bottom: 12px; }
div.mode select { background: #316ac5; color: #fff; border: 1px dotted #222; margin: 1px 3px 1px 1px; line-height: 12px; }
.dright p { line-height: 12px; margin-bottom: 9px; padding-top: 2px; }
.dright dl { display: grid; grid-template-columns: 43px 1fr; padding-left: 11px; line-height: 15px; }
.swatch { display: block; width: 83px; height: 55px; margin: 74px 0 0 4px; }
.dbtns { display: flex; justify-content: flex-end; gap: 5px; padding: 11px 5px 0 0; }
.dbtns button { width: 73px; height: 20px; border: 1px solid #003c74; border-radius: 3px; background: linear-gradient(#fff, #f0f0ea); }
.dbtns .ok { box-shadow: inset 0 0 0 2px #a9c4f2; }

/* forum mark */
.mark { position: absolute; right: 5px; bottom: 0; width: 126px; line-height: 16px; color: #1c6da8; text-shadow: 0 0 2px #ffffa0, 1px 1px 1px #ffffa0, -1px -1px 1px #ffffa0; pointer-events: none; white-space: nowrap; }
.mark div { display: flex; align-items: center; }
.mark b { font-size: 22px; font-weight: 500; line-height: 22px; width: 71px; }
.mark em { font-size: 17px; color: #e0451c; }
.mark span { font: 16px/16px "Liberation Mono", monospace; display: block; }
```
